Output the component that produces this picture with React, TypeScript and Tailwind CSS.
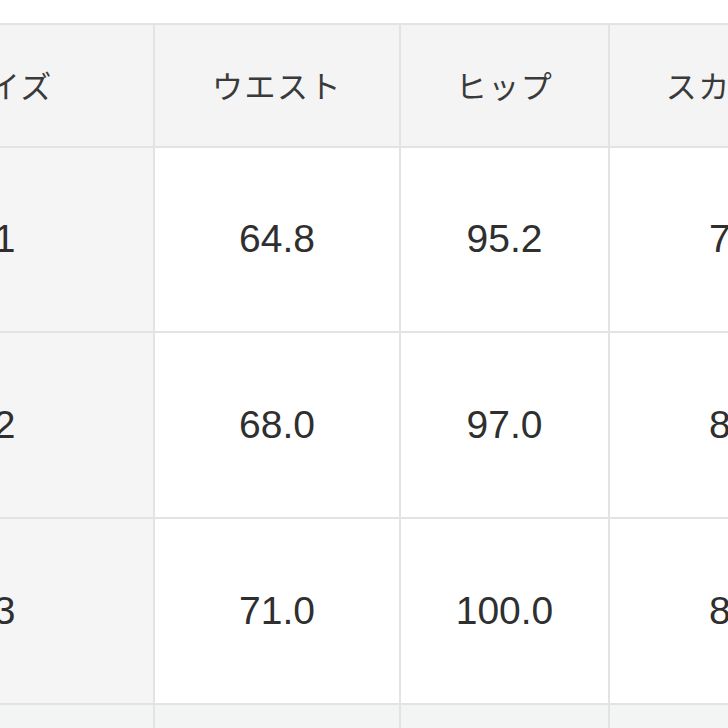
const HEADERS = ["サイズ", "ウエスト", "ヒップ", "スカート丈"];

const ROWS = [
  ["1", "64.8", "95.2", "75.0"],
  ["2", "68.0", "97.0", "80.0"],
  ["3", "71.0", "100.0", "82.0"],
];

const JP = "font-['Noto_Sans_CJK_JP','Noto_Sans',sans-serif]";
const NUM = "font-['Liberation_Sans',Arial,sans-serif]";

export default function App() {
  return (
    <div className="w-[728px] h-[728px] overflow-hidden bg-white">
      <div className="pt-[23px]">
        <div className="-ml-[144px] w-[1100px] grid grid-cols-[297px_244px_207px_274px_200px] grid-rows-[121px_183px_184px_184px_40px] gap-[2px] bg-[#e1e3e5] py-[2px]">
          {HEADERS.map((h) => (
            <div
              key={h}
              className={`bg-[#f4f4f4] flex items-center justify-center whitespace-nowrap text-[31px] tracking-[1.5px] text-[#3a3a3a] ${JP}`}
            >
              {h}
            </div>
          ))}
          <div className="bg-[#f4f4f4]" />

          {ROWS.map((row) =>
            row.map((v, i) => (
              <div
                key={row[0] + i}
                className={`flex items-center justify-center text-[39px] text-[#2f2f2f] ${NUM} ${
                  i === 0 ? "bg-[#f5f5f5]" : "bg-white"
                }`}
              >
                {v}
              </div>
            )).concat(<div key={row[0] + "x"} className="bg-white" />)
          )}

          {[0, 1, 2, 3, 4].map((i) => (
            <div key={"f" + i} className="bg-[#f3f4f4]" />
          ))}
        </div>
      </div>
    </div>
  );
}
